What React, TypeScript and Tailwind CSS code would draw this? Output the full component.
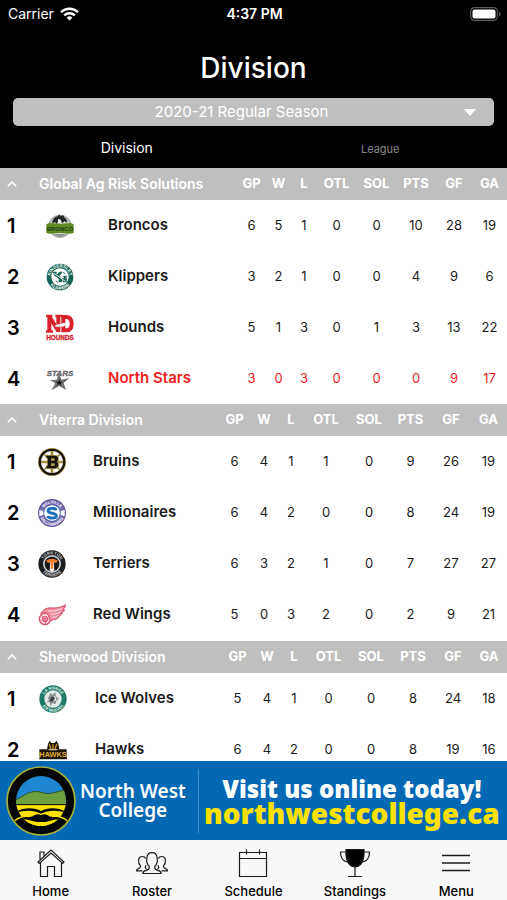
import { useState } from 'react'
import type { ReactNode } from 'react'

type Team = {
  name: string
  logo: ReactNode
  stats: number[]
  highlight?: boolean
}

type DivisionData = {
  name: string
  logoCol: string
  cols: string[]
  teams: Team[]
}

const STAT_LABELS = ['GP', 'W', 'L', 'OTL', 'SOL', 'PTS', 'GF', 'GA']

function Logo({ children }: { children: ReactNode }) {
  return (
    <svg viewBox="0 0 84 84" className="mx-auto block size-7" fontFamily="Liberation Sans, sans-serif" aria-hidden="true">
      {children}
    </svg>
  )
}

// Lettering that runs round a badge, top arc and bottom arc
function RingText({ id, top, bottom, fill, size = 13 }: { id: string; top: string; bottom: string; fill: string; size?: number }) {
  return (
    <g fill={fill} fontSize={size} fontWeight="bold" textAnchor="middle">
      <path id={id + '-top'} d="M13 42a29 29 0 0 1 58 0" fill="none" />
      <path id={id + '-bottom'} d="M4 42a38 38 0 0 0 76 0" fill="none" />
      <text>
        <textPath href={'#' + id + '-top'} startOffset="50%">{top}</textPath>
      </text>
      <text>
        <textPath href={'#' + id + '-bottom'} startOffset="50%">{bottom}</textPath>
      </text>
    </g>
  )
}

const BroncosLogo = () => (
  <Logo>
    <circle cx="42" cy="43" r="35" fill="#a9ada9" />
    <circle cx="42" cy="43" r="29" fill="#dfe2df" />
    <path d="M18 34c2-13 9-20 18-21l3-6 5 5 8-2 2 6c6 3 9 8 10 16l-9-4-6 6-5-10-8 3-3 9-6-5z" fill="#1f2420" />
    <path d="M36 20l8 3-3 9-5-3z" fill="#f4f4f4" />
    <path d="M1 37l9-4 32 2 32-2 9 4v26l-9 2-32-2-32 2-9-2z" fill="#5f8a22" />
    <text x="42" y="56" fontSize="18" fontWeight="bold" textAnchor="middle" fill="#24391a">BRONCO</text>
    <path d="M24 66h36l-18 9z" fill="#8b918c" />
  </Logo>
)

const KlippersLogo = () => (
  <Logo>
    <circle cx="42" cy="42" r="40" fill="#176354" />
    <circle cx="42" cy="42" r="26" fill="#fff" />
    <RingText id="klippers" top="KINDERSLEY" bottom="KLIPPERS" fill="#fff" />
    <path d="M20 26h12v9l8-9h10l-9 12 5 8h8l-3-8h11v20H51v-8l-4 8H37l2-9-8-8-5-1z" fill="#176354" />
    <path d="M24 31l34 24" stroke="#dcebe6" strokeWidth="3" />
    <path d="M30 53l5 6M52 27l6 6" stroke="#176354" strokeWidth="3" />
  </Logo>
)

const HoundsLogo = () => (
  <Logo>
    <g fill="none" stroke="#d8232a" strokeWidth="12">
      <path d="M10 4v50M37 4v50" />
      <path d="M10 8l27 43" />
      <path d="M52 9h8c12 0 17 8 17 20s-5 20-17 20h-8z" />
    </g>
    <path d="M0 2h19v7H0zM28 2h20v7H28zM0 49h21v7H0z" fill="#d8232a" />
    <path d="M25 36l11-6 8 1 9-5 11 3 4-4-2 8-11 2-5 4-5-3-7 3-8-1z" fill="#fff" />
    <text x="42" y="78" fontSize="19" fontWeight="bold" textAnchor="middle" fill="#d8232a" stroke="#d8232a">HOUNDS</text>
  </Logo>
)

const StarsLogo = () => (
  <Logo>
    <path d="M39 25l7 19 24-5-17 15 7 21-20-12-24 13 12-21-16-10 20-1z" fill="#6f7072" />
    <path d="M40 42l3 8 8 1-7 4 1 7-6-5-7 4 3-7-5-5 8 1z" fill="#111" />
    <text x="42" y="33" fontSize="24" fontWeight="bold" fontStyle="italic" textAnchor="middle" fill="#76777a" stroke="#4b4c4e">STARS</text>
  </Logo>
)

const BruinsLogo = () => (
  <Logo>
    <circle cx="42" cy="42" r="42" fill="#b39a45" />
    <circle cx="42" cy="42" r="40" fill="#15130c" />
    <circle cx="42" cy="42" r="33" fill="#fff" />
    <path d="M42 9v66M9 42h66" stroke="#a58e3c" strokeWidth="8" />
    <path d="M19 19l46 46M65 19L19 65" stroke="#a58e3c" strokeWidth="5" />
    <path d="M24 22h25c15 0 15 15 8 20 9 5 7 20-8 20H24v-8h4V30h-4z" fill="#15130c" stroke="#b39a45" strokeWidth="2" />
    <path d="M39 31h8c5 0 5 7 0 7h-8zM39 46h8c5 0 5 8 0 8h-8z" fill="#b39a45" />
  </Logo>
)

const MillionairesLogo = () => (
  <Logo>
    <circle cx="42" cy="42" r="42" fill="#5f5399" />
    <circle cx="42" cy="42" r="38" fill="#7469ad" />
    <circle cx="42" cy="42" r="25" fill="#fff" stroke="#4b63ac" strokeWidth="3" />
    <path d="M4 33l12 3v12L4 52zM80 33l-12 3v12l12 4z" fill="#fff" />
    <RingText id="millionaires" top="MELVILLE" bottom="MILLIONAIRES" fill="#fff" size={12} />
    <path d="M54 34c-2-8-23-8-24 1 0 10 24 6 25 15 0 9-23 10-26 1" fill="none" stroke="#1b6fb8" strokeWidth="9" />
  </Logo>
)

const TerriersLogo = () => (
  <Logo>
    <circle cx="42" cy="42" r="41" fill="#1c1d1f" />
    <circle cx="42" cy="42" r="27" fill="#c9ccce" />
    <circle cx="42" cy="42" r="22" fill="#17181a" />
    <RingText id="terriers" top="YORKTON" bottom="TERRIERS" fill="#c9ccce" />
    <path d="M25 32c8-8 26-8 34 0l-4 6H29z" fill="#ef7d2c" />
    <path d="M37 37h10l2 24-7 4-7-4z" fill="#fff" />
    <path d="M39 36h6l1 20h-8z" fill="#ef7d2c" />
  </Logo>
)

const RedWingsLogo = () => (
  <Logo>
    <circle cx="21" cy="54" r="17" fill="#fbd9de" stroke="#d9506a" strokeWidth="4" />
    <circle cx="21" cy="54" r="8" fill="#f3a3b0" stroke="#d9506a" strokeWidth="3" />
    <path d="M21 54L10 44M21 54l13-8M21 54l2 15M21 54L7 60" stroke="#d9506a" strokeWidth="2" />
    <path d="M8 38c8-15 22-19 38-17 14 0 27-4 37-10-1 9-6 13-11 15h8c-3 7-9 10-14 11h7c-4 7-10 9-15 10h6c-5 7-12 9-18 9-4 3-10 3-12 1 2-9-3-19-12-21-5-1-10 0-14 2z" fill="#f08c9d" stroke="#d9506a" strokeWidth="3" />
    <path d="M30 30c14 1 28 0 43-8M38 39c11 1 20-1 30-5M41 49c8 0 15-1 21-5" fill="none" stroke="#fbe3e7" strokeWidth="3" />
  </Logo>
)

const IceWolvesLogo = () => (
  <Logo>
    <circle cx="42" cy="42" r="41" fill="#1d7a67" />
    <circle cx="42" cy="42" r="26" fill="#e4e7e8" />
    <RingText id="icewolves" top="LA RONGE" bottom="ICE WOLVES" fill="#e9f4f0" size={12} />
    <path d="M27 40l8-17 5 7 9-8 2 12 9 8-7 3-4 13-8-4-7 9-2-12-9 1 7-7z" fill="#878d91" />
    <path d="M38 35l7 1-1 8-7 7-5-4z" fill="#33393b" />
    <path d="M46 33l5 7-4 8" fill="none" stroke="#fff" strokeWidth="3" />
  </Logo>
)

const HawksLogo = () => (
  <Logo>
    <path d="M27 24l5-10 5 7h10l5-7 6 10 3 16H24z" fill="#1d1709" />
    <path d="M31 24l5 16M53 24l-5 16M42 25v15" stroke="#c99a2e" strokeWidth="4" />
    <path d="M1 40h26l5 3h20l5-3h26v25l2 5H0l2-5z" fill="#1d1709" />
    <text x="42" y="64" fontSize="22" fontWeight="bold" textAnchor="middle" fill="#e2ad35">HAWKS</text>
  </Logo>
)

const DIVISIONS: DivisionData[] = [
  {
    name: 'Global Ag Risk Solutions',
    logoCol: 'w-[57px]',
    cols: ['w-[27px]', 'w-[27px]', 'w-[24px]', 'w-[41px]', 'w-[39px]', 'w-[40px]', 'w-[36px]', 'w-[35px]'],
    teams: [
      { name: 'Broncos', logo: <BroncosLogo />, stats: [6, 5, 1, 0, 0, 10, 28, 19] },
      { name: 'Klippers', logo: <KlippersLogo />, stats: [3, 2, 1, 0, 0, 4, 9, 6] },
      { name: 'Hounds', logo: <HoundsLogo />, stats: [5, 1, 3, 0, 1, 3, 13, 22] },
      { name: 'North Stars', logo: <StarsLogo />, stats: [3, 0, 3, 0, 0, 0, 9, 17], highlight: true },
    ],
  },
  {
    name: 'Viterra Division',
    logoCol: 'w-[42px]',
    cols: ['w-[29px]', 'w-[30px]', 'w-[24px]', 'w-[46px]', 'w-[40px]', 'w-[43px]', 'w-[38px]', 'w-[37px]'],
    teams: [
      { name: 'Bruins', logo: <BruinsLogo />, stats: [6, 4, 1, 1, 0, 9, 26, 19] },
      { name: 'Millionaires', logo: <MillionairesLogo />, stats: [6, 4, 2, 0, 0, 8, 24, 19] },
      { name: 'Terriers', logo: <TerriersLogo />, stats: [6, 3, 2, 1, 0, 7, 27, 27] },
      { name: 'Red Wings', logo: <RedWingsLogo />, stats: [5, 0, 3, 2, 0, 2, 9, 21] },
    ],
  },
  {
    name: 'Sherwood Division',
    logoCol: 'w-[44px]',
    cols: ['w-[29px]', 'w-[30px]', 'w-[24px]', 'w-[45px]', 'w-[40px]', 'w-[44px]', 'w-[36px]', 'w-[36px]'],
    teams: [
      { name: 'Ice Wolves', logo: <IceWolvesLogo />, stats: [5, 4, 1, 0, 0, 8, 24, 18] },
      { name: 'Hawks', logo: <HawksLogo />, stats: [6, 4, 2, 0, 0, 8, 19, 16] },
    ],
  },
]

function StatusBar() {
  return (
    <div className="grid h-7 grid-cols-3 items-center pl-2 pr-1.5 text-sm">
      <div className="flex items-center gap-1.5">
        <span>Carrier</span>
        <svg width="19" height="14" viewBox="0 0 19 14" fill="none" stroke="currentColor" strokeWidth="2.4" aria-hidden="true">
          <path d="M1 5.2a12.2 12.2 0 0 1 17 0" />
          <path d="M4.2 8.4a7.6 7.6 0 0 1 10.6 0" />
          <path d="M9.5 13.6L6.6 10.7a4.2 4.2 0 0 1 5.8 0z" fill="currentColor" stroke="none" />
        </svg>
      </div>
      <span className="text-center font-semibold">4:37 PM</span>
      <svg width="31" height="14" viewBox="0 0 31 14" className="justify-self-end" aria-hidden="true">
        <rect x="0.7" y="0.7" width="26.6" height="12.6" rx="3.6" fill="none" stroke="#5c5c5c" strokeWidth="1.2" />
        <rect x="2.5" y="2.5" width="23" height="9" rx="2" fill="#fff" />
        <path d="M29 4.5c2 .8 2 4.2 0 5z" fill="#5c5c5c" />
      </svg>
    </div>
  )
}

function DivisionTable({ division }: { division: DivisionData }) {
  const [open, setOpen] = useState(true)

  return (
    <table className="w-full table-fixed border-collapse not-first:mb-px">
      <colgroup>
        <col className="w-[31px]" />
        <col className={division.logoCol} />
        <col />
        {division.cols.map((width, i) => (
          <col key={i} className={width} />
        ))}
      </colgroup>
      <thead>
        <tr className="h-8 bg-[#bfbfbf] text-[13px] text-white">
          <th className="p-0 text-left">
            <button onClick={() => setOpen(!open)} aria-label={'Toggle ' + division.name} className="flex h-8 w-full items-center pl-[7px]">
              <svg width="10" height="6" viewBox="0 0 10 6" fill="none" stroke="currentColor" strokeWidth="1.5">
                <path d="M0.8 5.2L5 1l4.2 4.2" />
              </svg>
            </button>
          </th>
          <th colSpan={2} className="whitespace-nowrap p-0 pl-2 text-left text-sm font-semibold">
            {division.name}
          </th>
          {STAT_LABELS.map((label) => (
            <th key={label} className="p-0 text-center font-bold">
              {label}
            </th>
          ))}
        </tr>
      </thead>
      {open && (
        <tbody>
          {division.teams.map((team, i) => (
            <tr key={team.name} className={team.highlight ? 'h-[51px] text-[#f0201c]' : 'h-[51px] text-[#1a1a1a]'}>
              <td className="p-0 pl-[7px] text-xl font-semibold text-black">{i + 1}</td>
              <td className="p-0">{team.logo}</td>
              <td className="whitespace-nowrap p-0 pl-5 text-[15px] font-semibold">{team.name}</td>
              {team.stats.map((value, j) => (
                <td key={j} className="p-0 text-center text-[13px]">
                  {value}
                </td>
              ))}
            </tr>
          ))}
        </tbody>
      )}
    </table>
  )
}

function AdBanner() {
  return (
    <a href="#northwestcollege" className="flex h-[79px] shrink-0 items-center bg-[#0469b5] px-1.5 font-['Noto_Sans',sans-serif] text-white">
      <svg viewBox="0 0 210 210" className="size-[70px] shrink-0" aria-hidden="true">
        <defs>
          <clipPath id="college-disc">
            <circle cx="105" cy="105" r="75" />
          </clipPath>
        </defs>
        <circle cx="105" cy="105" r="102" fill="#050505" stroke="#a5b33c" strokeWidth="5" />
        <g clipPath="url(#college-disc)">
          <path d="M0 0h210v116H0z" fill="#1e86d0" />
          <path d="M20 105c30-10 42-28 66-28 14-3 28 7 42 6 20-3 35-8 60-14v50H20z" fill="#6c9f3e" stroke="#33561f" strokeWidth="3" />
          <path d="M0 116h210v94H0z" fill="#fde100" />
          <path d="M20 144c24-20 62-22 85-9 23-13 61-11 85 9-26-12-62-14-85-1-23-13-59-11-85 1z" fill="#050505" />
          <path d="M20 160c24-10 40-9 58-8 8-8 20-10 27-4 7-6 19-4 27 4 18-1 34-2 58 8v50h-40c20-14 10-32-12-44-10 0-20 4-33 2-13 2-23-2-33-2-22 12-32 30-12 44H20z" fill="#050505" />
          <path d="M50 162c16-6 28 8 55 6 27 2 39-12 55-6-8 14-26 22-55 22s-47-8-55-22z" fill="#fde100" />
        </g>
        <path d="M30 116h150" stroke="#050505" strokeWidth="3" />
        <path d="M26 164c16-12 30-16 46-12M184 164c-16-12-30-16-46-12" fill="none" stroke="#fde100" strokeWidth="4" />
      </svg>
      <div className="ml-1 shrink-0 text-center text-[19px] font-semibold leading-[19px]">
        North West
        <br />
        College
      </div>
      <div className="ml-3 h-16 w-px shrink-0 bg-[#3f8fce]" />
      <div className="flex-1 whitespace-nowrap pl-1 text-center font-black">
        <div className="text-2xl leading-6">Visit us online today!</div>
        <div className="text-[28px] leading-6 text-[#ffe100]">northwestcollege.ca</div>
      </div>
    </a>
  )
}

const NAV_ITEMS = [
  {
    label: 'Home',
    icon: (
      <>
        <path d="M2 14L15 2l13 12-1.300 1.500L15 5 3.300 15.500z" />
        <path d="M4.500 14.800V28.500H11.500V18.500h7v10h7V14.800" />
        <path d="M4 11.500V4h4v4" />
      </>
    ),
  },
  {
    label: 'Roster',
    icon: (
      <>
        <path d="M12.300 18.500c.400 2.500-1 3.200-3.200 3.800-2.600.700-3.300 1.600-3.300 3.200h18.400c0-1.600-.700-2.500-3.300-3.200-2.200-.600-3.600-1.300-3.200-3.800 2.600-2.300 2.800-6 2.500-8.500-.300-3-2.300-5.300-5.200-5.300s-4.900 2.300-5.200 5.300c-.3 2.500-.100 6.200 2.500 8.500z" />
        <path d="M8.600 10.500C7.900 8.800 6.600 8.500 5.300 8.500c-2.200 0-3.500 1.500-3.700 3.600-.2 2.400.3 4.200 1.900 5.800.3 1.700-.5 2.200-2 2.700-1.700.5-2 1.200-2 2.200h6" />
        <path d="M9.300 17.300c-1.500 1.300-1.300 2.800.2 3.300" />
        <path d="M21.400 10.500c.7-1.700 2-2 3.300-2 2.200 0 3.500 1.500 3.700 3.600.2 2.400-.3 4.200-1.900 5.800-.3 1.700.5 2.200 2 2.700 1.700.5 2 1.200 2 2.200h-6" />
        <path d="M20.700 17.300c1.500 1.300 1.300 2.800-.2 3.300" />
      </>
    ),
  },
  {
    label: 'Schedule',
    icon: (
      <>
        <path d="M1.500 4.500h27v24h-27zM1.500 10.500h27" />
        <path d="M8.500 1.500v5M21.500 1.500v5" />
      </>
    ),
  },
  {
    label: 'Standings',
    icon: (
      <>
        <path d="M6 1.500h18c.4 8-.5 12-3.500 15-1.700 1.700-3.300 2.500-5.500 2.500s-3.800-.8-5.500-2.500C6.500 13.500 5.600 9.500 6 1.500z" fill="#000" />
        <path d="M6 4H.500c0 6 2.500 10 8 10M24 4h5.500c0 6-2.500 10-8 10M15 19v9.500M8 28.500h14" />
      </>
    ),
  },
  { label: 'Menu', icon: <path d="M1 7.500h28M1 15h28M1 22.500h28" strokeWidth="1.500" /> },
]

function BottomNav() {
  return (
    <nav className="grid shrink-0 grid-cols-5 bg-[#f8f8f8] pb-px pt-2 text-black">
      {NAV_ITEMS.map((item) => (
        <a key={item.label} href={'#' + item.label.toLowerCase()} className="flex flex-col items-center gap-[5px] text-[13px] font-medium leading-4">
          <svg viewBox="0 0 30 30" className="size-[30px] overflow-visible" fill="none" stroke="#1a1a1a" strokeWidth="1.2" aria-hidden="true">
            {item.icon}
          </svg>
          {item.label}
        </a>
      ))}
    </nav>
  )
}

export default function App() {
  const [tab, setTab] = useState('Division')

  return (
    <div className="flex h-screen flex-col bg-white font-[Inter,sans-serif]">
      <header className="shrink-0 bg-black text-white">
        <StatusBar />
        <h1 className="mt-5 text-center text-[28px] font-medium leading-10">{tab}</h1>
        <div className="relative mx-[13px] mt-2.5">
          <select aria-label="Season" className="block h-7 w-full appearance-none rounded-[5px] bg-[#bfbfbf] pr-6 text-center text-[15px] text-white [text-align-last:center]">
            <option>2020-21 Regular Season</option>
          </select>
          <svg width="12" height="7" viewBox="0 0 12 7" fill="#fff" className="pointer-events-none absolute right-[18px] top-[11px]" aria-hidden="true">
            <path d="M0 0h12L6 7z" />
          </svg>
        </div>
        <div className="flex h-[42px] items-center">
          {['Division', 'League'].map((name) => (
            <button key={name} onClick={() => setTab(name)} className={tab === name ? 'flex-1 pt-px text-sm text-white' : 'flex-1 pt-1 text-[11px] text-[#8a8a8a]'}>
              {name}
            </button>
          ))}
        </div>
      </header>
      <main className="min-h-0 flex-1 overflow-y-auto [scrollbar-width:none]">
        {DIVISIONS.map((division) => (
          <DivisionTable key={division.name} division={division} />
        ))}
      </main>
      <AdBanner />
      <BottomNav />
    </div>
  )
}
